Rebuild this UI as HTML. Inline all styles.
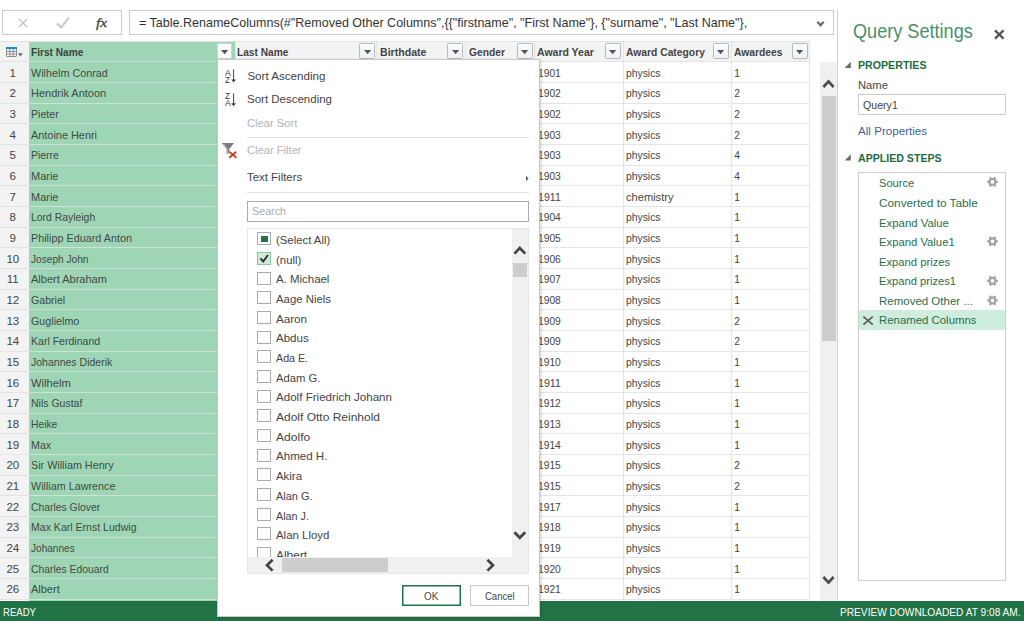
<!DOCTYPE html>
<html lang="en"><head><meta charset="utf-8"><title>Query Editor</title>
<style>
html,body{margin:0;padding:0}
body{width:1024px;height:621px;position:relative;overflow:hidden;background:#fff;font-family:'Liberation Sans',sans-serif}
.t{position:absolute;white-space:pre;line-height:normal;transform-origin:0 0}
.b{position:absolute;box-sizing:border-box}
svg{position:absolute;overflow:visible}
</style></head><body>

<div class="b" style="left:2.20px;top:10.30px;width:119.70px;height:25.20px;border:1px solid #cacaca;background:#fff"></div>
<div class="b" style="left:129.00px;top:10.30px;width:705.00px;height:25.20px;border:1px solid #cacaca;background:#fff"></div>
<svg style="left:0;top:0" width="1024" height="621" viewBox="0 0 1024 621">
<path d="M18.9 18.9 L27.3 26.9 M27.3 18.9 L18.9 26.9" stroke="#c4c4c4" stroke-width="1.4" fill="none"/>
<path d="M56.8 23.4 L61.3 27.4 L68.8 17.6" stroke="#cdcdcd" stroke-width="2.3" fill="none"/>
<path d="M817.3 21.7 L820.5 25.3 L823.7 21.7" stroke="#6a6a6a" stroke-width="2.2" fill="none"/>
</svg>
<div class="b" style="left:0.00px;top:41.40px;width:809.80px;height:20.20px;background:#f3f3f3"></div>
<div class="b" style="left:0.00px;top:61.60px;width:29.00px;height:537.60px;background:#f3f3f3"></div>
<div class="b" style="left:29.00px;top:41.40px;width:205.80px;height:559.90px;background:#9ed5b5"></div>
<div class="b" style="left:0.00px;top:61.30px;width:29.00px;height:1.00px;background:#e4e4e4"></div>
<div class="b" style="left:29.00px;top:61.30px;width:205.80px;height:1.00px;background:#cde3d7"></div>
<div class="b" style="left:234.80px;top:61.30px;width:575.00px;height:1.00px;background:#e5e5e5"></div>
<div class="b" style="left:0.00px;top:81.97px;width:29.00px;height:1.00px;background:#e4e4e4"></div>
<div class="b" style="left:29.00px;top:81.97px;width:205.80px;height:1.00px;background:#cde3d7"></div>
<div class="b" style="left:234.80px;top:81.97px;width:575.00px;height:1.00px;background:#e5e5e5"></div>
<div class="b" style="left:0.00px;top:102.63px;width:29.00px;height:1.00px;background:#e4e4e4"></div>
<div class="b" style="left:29.00px;top:102.63px;width:205.80px;height:1.00px;background:#cde3d7"></div>
<div class="b" style="left:234.80px;top:102.63px;width:575.00px;height:1.00px;background:#e5e5e5"></div>
<div class="b" style="left:0.00px;top:123.29px;width:29.00px;height:1.00px;background:#e4e4e4"></div>
<div class="b" style="left:29.00px;top:123.29px;width:205.80px;height:1.00px;background:#cde3d7"></div>
<div class="b" style="left:234.80px;top:123.29px;width:575.00px;height:1.00px;background:#e5e5e5"></div>
<div class="b" style="left:0.00px;top:143.96px;width:29.00px;height:1.00px;background:#e4e4e4"></div>
<div class="b" style="left:29.00px;top:143.96px;width:205.80px;height:1.00px;background:#cde3d7"></div>
<div class="b" style="left:234.80px;top:143.96px;width:575.00px;height:1.00px;background:#e5e5e5"></div>
<div class="b" style="left:0.00px;top:164.62px;width:29.00px;height:1.00px;background:#e4e4e4"></div>
<div class="b" style="left:29.00px;top:164.62px;width:205.80px;height:1.00px;background:#cde3d7"></div>
<div class="b" style="left:234.80px;top:164.62px;width:575.00px;height:1.00px;background:#e5e5e5"></div>
<div class="b" style="left:0.00px;top:185.29px;width:29.00px;height:1.00px;background:#e4e4e4"></div>
<div class="b" style="left:29.00px;top:185.29px;width:205.80px;height:1.00px;background:#cde3d7"></div>
<div class="b" style="left:234.80px;top:185.29px;width:575.00px;height:1.00px;background:#e5e5e5"></div>
<div class="b" style="left:0.00px;top:205.95px;width:29.00px;height:1.00px;background:#e4e4e4"></div>
<div class="b" style="left:29.00px;top:205.95px;width:205.80px;height:1.00px;background:#cde3d7"></div>
<div class="b" style="left:234.80px;top:205.95px;width:575.00px;height:1.00px;background:#e5e5e5"></div>
<div class="b" style="left:0.00px;top:226.62px;width:29.00px;height:1.00px;background:#e4e4e4"></div>
<div class="b" style="left:29.00px;top:226.62px;width:205.80px;height:1.00px;background:#cde3d7"></div>
<div class="b" style="left:234.80px;top:226.62px;width:575.00px;height:1.00px;background:#e5e5e5"></div>
<div class="b" style="left:0.00px;top:247.28px;width:29.00px;height:1.00px;background:#e4e4e4"></div>
<div class="b" style="left:29.00px;top:247.28px;width:205.80px;height:1.00px;background:#cde3d7"></div>
<div class="b" style="left:234.80px;top:247.28px;width:575.00px;height:1.00px;background:#e5e5e5"></div>
<div class="b" style="left:0.00px;top:267.95px;width:29.00px;height:1.00px;background:#e4e4e4"></div>
<div class="b" style="left:29.00px;top:267.95px;width:205.80px;height:1.00px;background:#cde3d7"></div>
<div class="b" style="left:234.80px;top:267.95px;width:575.00px;height:1.00px;background:#e5e5e5"></div>
<div class="b" style="left:0.00px;top:288.62px;width:29.00px;height:1.00px;background:#e4e4e4"></div>
<div class="b" style="left:29.00px;top:288.62px;width:205.80px;height:1.00px;background:#cde3d7"></div>
<div class="b" style="left:234.80px;top:288.62px;width:575.00px;height:1.00px;background:#e5e5e5"></div>
<div class="b" style="left:0.00px;top:309.28px;width:29.00px;height:1.00px;background:#e4e4e4"></div>
<div class="b" style="left:29.00px;top:309.28px;width:205.80px;height:1.00px;background:#cde3d7"></div>
<div class="b" style="left:234.80px;top:309.28px;width:575.00px;height:1.00px;background:#e5e5e5"></div>
<div class="b" style="left:0.00px;top:329.94px;width:29.00px;height:1.00px;background:#e4e4e4"></div>
<div class="b" style="left:29.00px;top:329.94px;width:205.80px;height:1.00px;background:#cde3d7"></div>
<div class="b" style="left:234.80px;top:329.94px;width:575.00px;height:1.00px;background:#e5e5e5"></div>
<div class="b" style="left:0.00px;top:350.61px;width:29.00px;height:1.00px;background:#e4e4e4"></div>
<div class="b" style="left:29.00px;top:350.61px;width:205.80px;height:1.00px;background:#cde3d7"></div>
<div class="b" style="left:234.80px;top:350.61px;width:575.00px;height:1.00px;background:#e5e5e5"></div>
<div class="b" style="left:0.00px;top:371.27px;width:29.00px;height:1.00px;background:#e4e4e4"></div>
<div class="b" style="left:29.00px;top:371.27px;width:205.80px;height:1.00px;background:#cde3d7"></div>
<div class="b" style="left:234.80px;top:371.27px;width:575.00px;height:1.00px;background:#e5e5e5"></div>
<div class="b" style="left:0.00px;top:391.94px;width:29.00px;height:1.00px;background:#e4e4e4"></div>
<div class="b" style="left:29.00px;top:391.94px;width:205.80px;height:1.00px;background:#cde3d7"></div>
<div class="b" style="left:234.80px;top:391.94px;width:575.00px;height:1.00px;background:#e5e5e5"></div>
<div class="b" style="left:0.00px;top:412.61px;width:29.00px;height:1.00px;background:#e4e4e4"></div>
<div class="b" style="left:29.00px;top:412.61px;width:205.80px;height:1.00px;background:#cde3d7"></div>
<div class="b" style="left:234.80px;top:412.61px;width:575.00px;height:1.00px;background:#e5e5e5"></div>
<div class="b" style="left:0.00px;top:433.27px;width:29.00px;height:1.00px;background:#e4e4e4"></div>
<div class="b" style="left:29.00px;top:433.27px;width:205.80px;height:1.00px;background:#cde3d7"></div>
<div class="b" style="left:234.80px;top:433.27px;width:575.00px;height:1.00px;background:#e5e5e5"></div>
<div class="b" style="left:0.00px;top:453.94px;width:29.00px;height:1.00px;background:#e4e4e4"></div>
<div class="b" style="left:29.00px;top:453.94px;width:205.80px;height:1.00px;background:#cde3d7"></div>
<div class="b" style="left:234.80px;top:453.94px;width:575.00px;height:1.00px;background:#e5e5e5"></div>
<div class="b" style="left:0.00px;top:474.60px;width:29.00px;height:1.00px;background:#e4e4e4"></div>
<div class="b" style="left:29.00px;top:474.60px;width:205.80px;height:1.00px;background:#cde3d7"></div>
<div class="b" style="left:234.80px;top:474.60px;width:575.00px;height:1.00px;background:#e5e5e5"></div>
<div class="b" style="left:0.00px;top:495.26px;width:29.00px;height:1.00px;background:#e4e4e4"></div>
<div class="b" style="left:29.00px;top:495.26px;width:205.80px;height:1.00px;background:#cde3d7"></div>
<div class="b" style="left:234.80px;top:495.26px;width:575.00px;height:1.00px;background:#e5e5e5"></div>
<div class="b" style="left:0.00px;top:515.93px;width:29.00px;height:1.00px;background:#e4e4e4"></div>
<div class="b" style="left:29.00px;top:515.93px;width:205.80px;height:1.00px;background:#cde3d7"></div>
<div class="b" style="left:234.80px;top:515.93px;width:575.00px;height:1.00px;background:#e5e5e5"></div>
<div class="b" style="left:0.00px;top:536.59px;width:29.00px;height:1.00px;background:#e4e4e4"></div>
<div class="b" style="left:29.00px;top:536.59px;width:205.80px;height:1.00px;background:#cde3d7"></div>
<div class="b" style="left:234.80px;top:536.59px;width:575.00px;height:1.00px;background:#e5e5e5"></div>
<div class="b" style="left:0.00px;top:557.26px;width:29.00px;height:1.00px;background:#e4e4e4"></div>
<div class="b" style="left:29.00px;top:557.26px;width:205.80px;height:1.00px;background:#cde3d7"></div>
<div class="b" style="left:234.80px;top:557.26px;width:575.00px;height:1.00px;background:#e5e5e5"></div>
<div class="b" style="left:0.00px;top:577.92px;width:29.00px;height:1.00px;background:#e4e4e4"></div>
<div class="b" style="left:29.00px;top:577.92px;width:205.80px;height:1.00px;background:#cde3d7"></div>
<div class="b" style="left:234.80px;top:577.92px;width:575.00px;height:1.00px;background:#e5e5e5"></div>
<div class="b" style="left:0.00px;top:598.59px;width:29.00px;height:1.00px;background:#e4e4e4"></div>
<div class="b" style="left:29.00px;top:598.59px;width:205.80px;height:1.00px;background:#cde3d7"></div>
<div class="b" style="left:234.80px;top:598.59px;width:575.00px;height:1.00px;background:#e5e5e5"></div>
<div class="b" style="left:234.80px;top:41.40px;width:1.00px;height:558.00px;background:#e5e5e5"></div>
<div class="b" style="left:376.30px;top:41.40px;width:1.00px;height:558.00px;background:#e5e5e5"></div>
<div class="b" style="left:464.50px;top:41.40px;width:1.00px;height:558.00px;background:#e5e5e5"></div>
<div class="b" style="left:534.00px;top:41.40px;width:1.00px;height:558.00px;background:#e5e5e5"></div>
<div class="b" style="left:622.90px;top:41.40px;width:1.00px;height:558.00px;background:#e5e5e5"></div>
<div class="b" style="left:730.80px;top:41.40px;width:1.00px;height:558.00px;background:#e5e5e5"></div>
<div class="b" style="left:809.00px;top:41.40px;width:1.00px;height:558.00px;background:#e5e5e5"></div>
<div class="b" style="left:0.00px;top:41.00px;width:810.00px;height:1.00px;background:#e2e2e2"></div>
<div class="b" style="left:216.90px;top:43.40px;width:15.40px;height:15.60px;border:1px solid #d2d2de;background:#fbfbfd;border-radius:1px"></div>
<svg style="left:221.2px;top:49.5px" width="7.2" height="4.3" viewBox="0 0 7.2 4.3"><path d="M0 0H7.2L3.6 4.3Z" fill="#555"/></svg>
<div class="b" style="left:359.20px;top:43.20px;width:15.90px;height:15.80px;border:1px solid #b4b9c2;background:linear-gradient(#fbfcfd,#eff2f6);border-radius:1.5px"></div>
<svg style="left:363.5px;top:49.5px" width="7.2" height="4.3" viewBox="0 0 7.2 4.3"><path d="M0 0H7.2L3.6 4.3Z" fill="#555"/></svg>
<div class="b" style="left:447.20px;top:43.20px;width:15.90px;height:15.80px;border:1px solid #b4b9c2;background:linear-gradient(#fbfcfd,#eff2f6);border-radius:1.5px"></div>
<svg style="left:451.5px;top:49.5px" width="7.2" height="4.3" viewBox="0 0 7.2 4.3"><path d="M0 0H7.2L3.6 4.3Z" fill="#555"/></svg>
<div class="b" style="left:517.00px;top:43.20px;width:15.90px;height:15.80px;border:1px solid #b4b9c2;background:linear-gradient(#fbfcfd,#eff2f6);border-radius:1.5px"></div>
<svg style="left:521.3px;top:49.5px" width="7.2" height="4.3" viewBox="0 0 7.2 4.3"><path d="M0 0H7.2L3.6 4.3Z" fill="#555"/></svg>
<div class="b" style="left:604.80px;top:43.20px;width:15.90px;height:15.80px;border:1px solid #b4b9c2;background:linear-gradient(#fbfcfd,#eff2f6);border-radius:1.5px"></div>
<svg style="left:609.1px;top:49.5px" width="7.2" height="4.3" viewBox="0 0 7.2 4.3"><path d="M0 0H7.2L3.6 4.3Z" fill="#555"/></svg>
<div class="b" style="left:712.80px;top:43.20px;width:15.90px;height:15.80px;border:1px solid #b4b9c2;background:linear-gradient(#fbfcfd,#eff2f6);border-radius:1.5px"></div>
<svg style="left:717.1px;top:49.5px" width="7.2" height="4.3" viewBox="0 0 7.2 4.3"><path d="M0 0H7.2L3.6 4.3Z" fill="#555"/></svg>
<div class="b" style="left:791.80px;top:43.20px;width:15.90px;height:15.80px;border:1px solid #b4b9c2;background:linear-gradient(#fbfcfd,#eff2f6);border-radius:1.5px"></div>
<svg style="left:796.1px;top:49.5px" width="7.2" height="4.3" viewBox="0 0 7.2 4.3"><path d="M0 0H7.2L3.6 4.3Z" fill="#555"/></svg>
<svg style="left:6px;top:47px" width="18" height="11" viewBox="0 0 18 11">
<rect x="0.5" y="0.5" width="10" height="9" fill="#fff" stroke="#8a8a8a" stroke-width="1" rx="0.6"/>
<rect x="0" y="0" width="11" height="2.1" fill="#1e8fc6"/>
<path d="M0.5 4.4H10.5M0.5 7H10.5M3.8 2V10M7.2 2V10" stroke="#8a8a8a" stroke-width="1" fill="none"/>
<path d="M12 6.3H16.8L14.4 9.6Z" fill="#666"/></svg>
<div class="b" style="left:820.40px;top:62.40px;width:16.40px;height:538.90px;background:#f0f0f0"></div>
<div class="b" style="left:821.90px;top:96.40px;width:13.90px;height:244.70px;background:#cdcdcd"></div>
<svg style="left:0;top:0" width="1024" height="621" viewBox="0 0 1024 621">
<path d="M823.4 87 L828.5 81.4 L833.6 87" stroke="#4a4a4a" stroke-width="2.7" fill="none"/>
<path d="M823.4 577 L828.5 582.6 L833.6 577" stroke="#4a4a4a" stroke-width="2.7" fill="none"/>
</svg>
<div class="b" style="left:837.20px;top:10.00px;width:1.00px;height:591.30px;background:#d0d0d0"></div>
<div class="b" style="left:858.20px;top:94.10px;width:147.60px;height:21.30px;border:1px solid #cacaca;background:#fff"></div>
<div class="b" style="left:858.20px;top:172.30px;width:147.40px;height:409.00px;border:1px solid #cecece;background:#fff"></div>
<div class="b" style="left:859.20px;top:310.40px;width:145.40px;height:19.60px;background:#cfeddc"></div>
<svg style="left:0;top:0" width="1024" height="621" viewBox="0 0 1024 621">
<path d="M995 30.3 L1003.6 38.6 M1003.6 30.3 L995 38.6" stroke="#555" stroke-width="2.3" fill="none"/>
<path d="M850.8 61.8 V67.9 H844.6 Z" fill="#6a6a6a"/>
<path d="M850.8 154.5 V160.6 H844.6 Z" fill="#6a6a6a"/>
<path d="M863.4 316.6 L872.8 324.6 M872.8 316.6 L863.4 324.6" stroke="#5a5a5a" stroke-width="1.7" fill="none"/>
<path d="M995.80 181.90L997.80 181.90M994.15 184.76L995.15 186.49M990.85 184.76L989.85 186.49M989.20 181.90L987.20 181.90M990.85 179.04L989.85 177.31M994.15 179.04L995.15 177.31" stroke="#a3a3a3" stroke-width="2.3" fill="none"/>
<circle cx="992.5" cy="181.9" r="2.9" fill="none" stroke="#a3a3a3" stroke-width="2.1"/>
<path d="M995.80 241.30L997.80 241.30M994.15 244.16L995.15 245.89M990.85 244.16L989.85 245.89M989.20 241.30L987.20 241.30M990.85 238.44L989.85 236.71M994.15 238.44L995.15 236.71" stroke="#a3a3a3" stroke-width="2.3" fill="none"/>
<circle cx="992.5" cy="241.3" r="2.9" fill="none" stroke="#a3a3a3" stroke-width="2.1"/>
<path d="M995.80 280.80L997.80 280.80M994.15 283.66L995.15 285.39M990.85 283.66L989.85 285.39M989.20 280.80L987.20 280.80M990.85 277.94L989.85 276.21M994.15 277.94L995.15 276.21" stroke="#a3a3a3" stroke-width="2.3" fill="none"/>
<circle cx="992.5" cy="280.8" r="2.9" fill="none" stroke="#a3a3a3" stroke-width="2.1"/>
<path d="M995.80 300.40L997.80 300.40M994.15 303.26L995.15 304.99M990.85 303.26L989.85 304.99M989.20 300.40L987.20 300.40M990.85 297.54L989.85 295.81M994.15 297.54L995.15 295.81" stroke="#a3a3a3" stroke-width="2.3" fill="none"/>
<circle cx="992.5" cy="300.4" r="2.9" fill="none" stroke="#a3a3a3" stroke-width="2.1"/>
</svg>
<div class="b" style="left:0.00px;top:601.30px;width:1024.00px;height:19.70px;background:#217346"></div>
<span class="t" style="left:537.60px;top:68px;font-size:10.2px;color:#444;transform:scaleX(1.0057);">1901</span>
<span class="t" style="left:537.60px;top:88px;font-size:10.2px;color:#444;transform:scaleX(1.0057);">1902</span>
<span class="t" style="left:537.60px;top:109px;font-size:10.2px;color:#444;transform:scaleX(1.0057);">1902</span>
<span class="t" style="left:537.60px;top:130px;font-size:10.2px;color:#444;transform:scaleX(1.0057);">1903</span>
<span class="t" style="left:537.60px;top:150px;font-size:10.2px;color:#444;transform:scaleX(1.0057);">1903</span>
<span class="t" style="left:537.60px;top:171px;font-size:10.2px;color:#444;transform:scaleX(1.0057);">1903</span>
<span class="t" style="left:537.60px;top:192px;font-size:10.2px;color:#444;transform:scaleX(1.0408);">1911</span>
<span class="t" style="left:537.60px;top:212px;font-size:10.2px;color:#444;transform:scaleX(1.0057);">1904</span>
<span class="t" style="left:537.60px;top:233px;font-size:10.2px;color:#444;transform:scaleX(1.0057);">1905</span>
<span class="t" style="left:537.60px;top:254px;font-size:10.2px;color:#444;transform:scaleX(1.0057);">1906</span>
<span class="t" style="left:537.60px;top:274px;font-size:10.2px;color:#444;transform:scaleX(1.0057);">1907</span>
<span class="t" style="left:537.60px;top:295px;font-size:10.2px;color:#444;transform:scaleX(1.0057);">1908</span>
<span class="t" style="left:537.60px;top:316px;font-size:10.2px;color:#444;transform:scaleX(1.0057);">1909</span>
<span class="t" style="left:537.60px;top:336px;font-size:10.2px;color:#444;transform:scaleX(1.0057);">1909</span>
<span class="t" style="left:537.60px;top:357px;font-size:10.2px;color:#444;transform:scaleX(1.0057);">1910</span>
<span class="t" style="left:537.60px;top:378px;font-size:10.2px;color:#444;transform:scaleX(1.0408);">1911</span>
<span class="t" style="left:537.60px;top:398px;font-size:10.2px;color:#444;transform:scaleX(1.0057);">1912</span>
<span class="t" style="left:537.60px;top:419px;font-size:10.2px;color:#444;transform:scaleX(1.0057);">1913</span>
<span class="t" style="left:537.60px;top:440px;font-size:10.2px;color:#444;transform:scaleX(1.0057);">1914</span>
<span class="t" style="left:537.60px;top:460px;font-size:10.2px;color:#444;transform:scaleX(1.0057);">1915</span>
<span class="t" style="left:537.60px;top:481px;font-size:10.2px;color:#444;transform:scaleX(1.0057);">1915</span>
<span class="t" style="left:537.60px;top:502px;font-size:10.2px;color:#444;transform:scaleX(1.0057);">1917</span>
<span class="t" style="left:537.60px;top:522px;font-size:10.2px;color:#444;transform:scaleX(1.0057);">1918</span>
<span class="t" style="left:537.60px;top:543px;font-size:10.2px;color:#444;transform:scaleX(1.0057);">1919</span>
<span class="t" style="left:537.60px;top:564px;font-size:10.2px;color:#444;transform:scaleX(1.0057);">1920</span>
<span class="t" style="left:537.60px;top:584px;font-size:10.2px;color:#444;transform:scaleX(1.0057);">1921</span>
<div class="b" style="left:216.70px;top:59.00px;width:323.80px;height:557.90px;background:#fff;border:1px solid #c8c8c8;box-shadow:1px 1px 3px rgba(0,0,0,0.18)"></div>
<div class="b" style="left:247.20px;top:137.00px;width:281.80px;height:1.00px;background:#e1e1e1"></div>
<div class="b" style="left:247.20px;top:192.10px;width:281.80px;height:1.00px;background:#e1e1e1"></div>
<div class="b" style="left:247.20px;top:201.30px;width:281.80px;height:21.20px;border:1px solid #ababab;background:#fff"></div>
<div class="b" style="left:247.20px;top:228.40px;width:281.80px;height:345.60px;border:1px solid #e6e6e6;background:#fff"></div>
<div class="b" style="left:511.60px;top:229.40px;width:16.40px;height:327.60px;background:#f0f0f0"></div>
<div class="b" style="left:248.20px;top:557.00px;width:279.80px;height:16.00px;background:#f0f0f0"></div>
<div class="b" style="left:512.90px;top:263.00px;width:14.00px;height:13.90px;background:#cdcdcd"></div>
<div class="b" style="left:281.50px;top:558.20px;width:106.00px;height:14.30px;background:#cdcdcd"></div>
<div class="b" style="left:257.20px;top:232.00px;width:13.60px;height:13.00px;border:1px solid #ababab;background:#fff"></div>
<div class="b" style="left:257.20px;top:252.00px;width:13.60px;height:13.00px;border:1px solid #86c9a4;background:#cfeadb"></div>
<div class="b" style="left:257.20px;top:272.00px;width:13.60px;height:13.00px;border:1px solid #ababab;background:#fff"></div>
<div class="b" style="left:257.20px;top:291.00px;width:13.60px;height:13.00px;border:1px solid #ababab;background:#fff"></div>
<div class="b" style="left:257.20px;top:311.00px;width:13.60px;height:13.00px;border:1px solid #ababab;background:#fff"></div>
<div class="b" style="left:257.20px;top:331.00px;width:13.60px;height:13.00px;border:1px solid #ababab;background:#fff"></div>
<div class="b" style="left:257.20px;top:350.00px;width:13.60px;height:13.00px;border:1px solid #ababab;background:#fff"></div>
<div class="b" style="left:257.20px;top:370.00px;width:13.60px;height:13.00px;border:1px solid #ababab;background:#fff"></div>
<div class="b" style="left:257.20px;top:390.00px;width:13.60px;height:13.00px;border:1px solid #ababab;background:#fff"></div>
<div class="b" style="left:257.20px;top:409.00px;width:13.60px;height:13.00px;border:1px solid #ababab;background:#fff"></div>
<div class="b" style="left:257.20px;top:429.00px;width:13.60px;height:13.00px;border:1px solid #ababab;background:#fff"></div>
<div class="b" style="left:257.20px;top:449.00px;width:13.60px;height:13.00px;border:1px solid #ababab;background:#fff"></div>
<div class="b" style="left:257.20px;top:468.00px;width:13.60px;height:13.00px;border:1px solid #ababab;background:#fff"></div>
<div class="b" style="left:257.20px;top:488.00px;width:13.60px;height:13.00px;border:1px solid #ababab;background:#fff"></div>
<div class="b" style="left:257.20px;top:508.00px;width:13.60px;height:13.00px;border:1px solid #ababab;background:#fff"></div>
<div class="b" style="left:257.20px;top:527.00px;width:13.60px;height:13.00px;border:1px solid #ababab;background:#fff"></div>
<div class="b" style="left:257.20px;top:547.00px;width:13.60px;height:10.00px;border:1px solid #ababab;background:#fff;border-bottom:none"></div>
<div class="b" style="left:260.80px;top:235.60px;width:6.80px;height:6.40px;background:#217346"></div>
<svg style="left:0;top:0" width="1024" height="621" viewBox="0 0 1024 621">
<path d="M260.4 258.4 L263.2 261.4 L268 255" stroke="#333" stroke-width="1.9" fill="none"/>
<path d="M514.4 253.6 L519.8 248 L525.2 253.6" stroke="#444" stroke-width="2.7" fill="none"/>
<path d="M514.4 532.2 L519.8 537.8 L525.2 532.2" stroke="#444" stroke-width="2.7" fill="none"/>
<path d="M272.6 559.8 L267 565.2 L272.6 570.6" stroke="#444" stroke-width="2.7" fill="none"/>
<path d="M487.4 559.8 L493 565.2 L487.4 570.6" stroke="#444" stroke-width="2.7" fill="none"/>
<path d="M526 175.6 L528.6 178.4 L526 181.2 Z" fill="#666"/>
<path d="M233.6 69.3 V80.5" stroke="#444" stroke-width="1" fill="none"/><path d="M231.2 79.6 H236 L233.6 82.6 Z" fill="#444"/>
<path d="M233.6 93.3 V104.2" stroke="#444" stroke-width="1" fill="none"/><path d="M231.2 103.3 H236 L233.6 106.3 Z" fill="#444"/>
<path d="M221.9 143 H234 L229.2 148.9 V151.4 L228.2 153.7 H226.6 V148.9 Z" fill="#7a7a7a"/>
<path d="M223.6 144 L227.4 148.6 V153" stroke="#c4c4c4" stroke-width="0.8" fill="none"/>
<path d="M229.2 151.6 L236.4 157.8 M236.2 151.8 L229.2 157.8" stroke="#d13b14" stroke-width="1.8" fill="none"/>
</svg>
<div class="b" style="left:401.60px;top:584.50px;width:59.40px;height:21.50px;border:1px solid #217346;background:#fff;box-shadow:inset 0 0 0 0.5px #217346"></div>
<div class="b" style="left:470.20px;top:584.50px;width:59.00px;height:21.50px;border:1px solid #c8c8c8;background:#fff"></div>
<div class="b" style="left:248.2px;top:229.4px;width:263.4px;height:327.6px;overflow:hidden">
<span class="t" style="left:27.80px;top:3.5999999999999943px;font-size:11.6px;color:#444;transform:scaleX(0.9780);">(Select All)</span>
<span class="t" style="left:27.80px;top:23.599999999999994px;font-size:11.6px;color:#444;transform:scaleX(0.9852);">(null)</span>
<span class="t" style="left:27.80px;top:42.599999999999994px;font-size:11.6px;color:#444;transform:scaleX(0.9866);">A. Michael</span>
<span class="t" style="left:27.80px;top:62.599999999999994px;font-size:11.6px;color:#444;transform:scaleX(0.9808);">Aage Niels</span>
<span class="t" style="left:27.80px;top:82.6px;font-size:11.6px;color:#444;">Aaron</span>
<span class="t" style="left:27.80px;top:101.6px;font-size:11.6px;color:#444;transform:scaleX(0.9947);">Abdus</span>
<span class="t" style="left:27.80px;top:121.6px;font-size:11.6px;color:#444;transform:scaleX(0.9221);">Ada E.</span>
<span class="t" style="left:27.80px;top:141.6px;font-size:11.6px;color:#444;transform:scaleX(0.9683);">Adam G.</span>
<span class="t" style="left:27.80px;top:160.6px;font-size:11.6px;color:#444;">Adolf Friedrich Johann</span>
<span class="t" style="left:27.80px;top:180.6px;font-size:11.6px;color:#444;transform:scaleX(1.0343);">Adolf Otto Reinhold</span>
<span class="t" style="left:27.80px;top:200.6px;font-size:11.6px;color:#444;transform:scaleX(1.0403);">Adolfo</span>
<span class="t" style="left:27.80px;top:219.6px;font-size:11.6px;color:#444;transform:scaleX(0.9968);">Ahmed H.</span>
<span class="t" style="left:27.80px;top:239.6px;font-size:11.6px;color:#444;transform:scaleX(0.9840);">Akira</span>
<span class="t" style="left:27.80px;top:259.6px;font-size:11.6px;color:#444;transform:scaleX(0.9438);">Alan G.</span>
<span class="t" style="left:27.80px;top:279.6px;font-size:11.6px;color:#444;transform:scaleX(0.9308);">Alan J.</span>
<span class="t" style="left:27.80px;top:298.6px;font-size:11.6px;color:#444;transform:scaleX(0.9860);">Alan Lloyd</span>
<span class="t" style="left:27.80px;top:318.6px;font-size:11.6px;color:#444;transform:scaleX(1.0298);">Albert</span>
</div>
<span class="t" style="left:9.60px;top:67px;font-size:11.5px;color:#444;">1</span>
<span class="t" style="left:31.20px;top:68px;font-size:10.2px;color:#3f4a44;transform:scaleX(1.0598);">Wilhelm Conrad</span>
<span class="t" style="left:625.80px;top:68px;font-size:10.2px;color:#444;transform:scaleX(1.0152);">physics</span>
<span class="t" style="left:734.20px;top:68px;font-size:10.2px;color:#444;">1</span>
<span class="t" style="left:9.60px;top:87px;font-size:11.5px;color:#444;">2</span>
<span class="t" style="left:31.20px;top:88px;font-size:10.2px;color:#3f4a44;transform:scaleX(1.0793);">Hendrik Antoon</span>
<span class="t" style="left:625.80px;top:88px;font-size:10.2px;color:#444;transform:scaleX(1.0152);">physics</span>
<span class="t" style="left:734.20px;top:88px;font-size:10.2px;color:#444;">2</span>
<span class="t" style="left:9.60px;top:108px;font-size:11.5px;color:#444;">3</span>
<span class="t" style="left:31.20px;top:109px;font-size:10.2px;color:#3f4a44;transform:scaleX(1.0441);">Pieter</span>
<span class="t" style="left:625.80px;top:109px;font-size:10.2px;color:#444;transform:scaleX(1.0152);">physics</span>
<span class="t" style="left:734.20px;top:109px;font-size:10.2px;color:#444;">2</span>
<span class="t" style="left:9.60px;top:129px;font-size:11.5px;color:#444;">4</span>
<span class="t" style="left:31.20px;top:130px;font-size:10.2px;color:#3f4a44;transform:scaleX(1.0691);">Antoine Henri</span>
<span class="t" style="left:625.80px;top:130px;font-size:10.2px;color:#444;transform:scaleX(1.0152);">physics</span>
<span class="t" style="left:734.20px;top:130px;font-size:10.2px;color:#444;">2</span>
<span class="t" style="left:9.60px;top:149px;font-size:11.5px;color:#444;">5</span>
<span class="t" style="left:31.20px;top:150px;font-size:10.2px;color:#3f4a44;transform:scaleX(1.0225);">Pierre</span>
<span class="t" style="left:625.80px;top:150px;font-size:10.2px;color:#444;transform:scaleX(1.0152);">physics</span>
<span class="t" style="left:734.20px;top:150px;font-size:10.2px;color:#444;">4</span>
<span class="t" style="left:9.60px;top:170px;font-size:11.5px;color:#444;">6</span>
<span class="t" style="left:31.20px;top:171px;font-size:10.2px;color:#3f4a44;transform:scaleX(1.0791);">Marie</span>
<span class="t" style="left:625.80px;top:171px;font-size:10.2px;color:#444;transform:scaleX(1.0152);">physics</span>
<span class="t" style="left:734.20px;top:171px;font-size:10.2px;color:#444;">4</span>
<span class="t" style="left:9.60px;top:191px;font-size:11.5px;color:#444;">7</span>
<span class="t" style="left:31.20px;top:192px;font-size:10.2px;color:#3f4a44;transform:scaleX(1.0791);">Marie</span>
<span class="t" style="left:625.80px;top:192px;font-size:10.2px;color:#444;transform:scaleX(1.0896);">chemistry</span>
<span class="t" style="left:734.20px;top:192px;font-size:10.2px;color:#444;">1</span>
<span class="t" style="left:9.60px;top:211px;font-size:11.5px;color:#444;">8</span>
<span class="t" style="left:31.20px;top:212px;font-size:10.2px;color:#3f4a44;transform:scaleX(1.0211);">Lord Rayleigh</span>
<span class="t" style="left:625.80px;top:212px;font-size:10.2px;color:#444;transform:scaleX(1.0152);">physics</span>
<span class="t" style="left:734.20px;top:212px;font-size:10.2px;color:#444;">1</span>
<span class="t" style="left:9.60px;top:232px;font-size:11.5px;color:#444;">9</span>
<span class="t" style="left:31.20px;top:233px;font-size:10.2px;color:#3f4a44;transform:scaleX(1.0604);">Philipp Eduard Anton</span>
<span class="t" style="left:625.80px;top:233px;font-size:10.2px;color:#444;transform:scaleX(1.0152);">physics</span>
<span class="t" style="left:734.20px;top:233px;font-size:10.2px;color:#444;">1</span>
<span class="t" style="left:6.40px;top:253px;font-size:11.5px;color:#444;">10</span>
<span class="t" style="left:31.20px;top:254px;font-size:10.2px;color:#3f4a44;transform:scaleX(0.9951);">Joseph John</span>
<span class="t" style="left:625.80px;top:254px;font-size:10.2px;color:#444;transform:scaleX(1.0152);">physics</span>
<span class="t" style="left:734.20px;top:254px;font-size:10.2px;color:#444;">1</span>
<span class="t" style="left:6.82px;top:273px;font-size:11.5px;color:#444;">11</span>
<span class="t" style="left:31.20px;top:274px;font-size:10.2px;color:#3f4a44;transform:scaleX(1.0795);">Albert Abraham</span>
<span class="t" style="left:625.80px;top:274px;font-size:10.2px;color:#444;transform:scaleX(1.0152);">physics</span>
<span class="t" style="left:734.20px;top:274px;font-size:10.2px;color:#444;">1</span>
<span class="t" style="left:6.40px;top:294px;font-size:11.5px;color:#444;">12</span>
<span class="t" style="left:31.20px;top:295px;font-size:10.2px;color:#3f4a44;transform:scaleX(1.0413);">Gabriel</span>
<span class="t" style="left:625.80px;top:295px;font-size:10.2px;color:#444;transform:scaleX(1.0152);">physics</span>
<span class="t" style="left:734.20px;top:295px;font-size:10.2px;color:#444;">1</span>
<span class="t" style="left:6.40px;top:315px;font-size:11.5px;color:#444;">13</span>
<span class="t" style="left:31.20px;top:316px;font-size:10.2px;color:#3f4a44;transform:scaleX(1.0529);">Guglielmo</span>
<span class="t" style="left:625.80px;top:316px;font-size:10.2px;color:#444;transform:scaleX(1.0152);">physics</span>
<span class="t" style="left:734.20px;top:316px;font-size:10.2px;color:#444;">2</span>
<span class="t" style="left:6.40px;top:335px;font-size:11.5px;color:#444;">14</span>
<span class="t" style="left:31.20px;top:336px;font-size:10.2px;color:#3f4a44;transform:scaleX(1.0340);">Karl Ferdinand</span>
<span class="t" style="left:625.80px;top:336px;font-size:10.2px;color:#444;transform:scaleX(1.0152);">physics</span>
<span class="t" style="left:734.20px;top:336px;font-size:10.2px;color:#444;">2</span>
<span class="t" style="left:6.40px;top:356px;font-size:11.5px;color:#444;">15</span>
<span class="t" style="left:31.20px;top:357px;font-size:10.2px;color:#3f4a44;transform:scaleX(1.0328);">Johannes Diderik</span>
<span class="t" style="left:625.80px;top:357px;font-size:10.2px;color:#444;transform:scaleX(1.0152);">physics</span>
<span class="t" style="left:734.20px;top:357px;font-size:10.2px;color:#444;">1</span>
<span class="t" style="left:6.40px;top:377px;font-size:11.5px;color:#444;">16</span>
<span class="t" style="left:31.20px;top:378px;font-size:10.2px;color:#3f4a44;transform:scaleX(1.0984);">Wilhelm</span>
<span class="t" style="left:625.80px;top:378px;font-size:10.2px;color:#444;transform:scaleX(1.0152);">physics</span>
<span class="t" style="left:734.20px;top:378px;font-size:10.2px;color:#444;">1</span>
<span class="t" style="left:6.40px;top:397px;font-size:11.5px;color:#444;">17</span>
<span class="t" style="left:31.20px;top:398px;font-size:10.2px;color:#3f4a44;transform:scaleX(1.0315);">Nils Gustaf</span>
<span class="t" style="left:625.80px;top:398px;font-size:10.2px;color:#444;transform:scaleX(1.0152);">physics</span>
<span class="t" style="left:734.20px;top:398px;font-size:10.2px;color:#444;">1</span>
<span class="t" style="left:6.40px;top:418px;font-size:11.5px;color:#444;">18</span>
<span class="t" style="left:31.20px;top:419px;font-size:10.2px;color:#3f4a44;transform:scaleX(1.0097);">Heike</span>
<span class="t" style="left:625.80px;top:419px;font-size:10.2px;color:#444;transform:scaleX(1.0152);">physics</span>
<span class="t" style="left:734.20px;top:419px;font-size:10.2px;color:#444;">1</span>
<span class="t" style="left:6.40px;top:439px;font-size:11.5px;color:#444;">19</span>
<span class="t" style="left:31.20px;top:440px;font-size:10.2px;color:#3f4a44;transform:scaleX(1.0494);">Max</span>
<span class="t" style="left:625.80px;top:440px;font-size:10.2px;color:#444;transform:scaleX(1.0152);">physics</span>
<span class="t" style="left:734.20px;top:440px;font-size:10.2px;color:#444;">1</span>
<span class="t" style="left:6.40px;top:459px;font-size:11.5px;color:#444;">20</span>
<span class="t" style="left:31.20px;top:460px;font-size:10.2px;color:#3f4a44;transform:scaleX(1.0575);">Sir William Henry</span>
<span class="t" style="left:625.80px;top:460px;font-size:10.2px;color:#444;transform:scaleX(1.0152);">physics</span>
<span class="t" style="left:734.20px;top:460px;font-size:10.2px;color:#444;">2</span>
<span class="t" style="left:6.40px;top:480px;font-size:11.5px;color:#444;">21</span>
<span class="t" style="left:31.20px;top:481px;font-size:10.2px;color:#3f4a44;transform:scaleX(1.0573);">William Lawrence</span>
<span class="t" style="left:625.80px;top:481px;font-size:10.2px;color:#444;transform:scaleX(1.0152);">physics</span>
<span class="t" style="left:734.20px;top:481px;font-size:10.2px;color:#444;">2</span>
<span class="t" style="left:6.40px;top:501px;font-size:11.5px;color:#444;">22</span>
<span class="t" style="left:31.20px;top:502px;font-size:10.2px;color:#3f4a44;transform:scaleX(1.0169);">Charles Glover</span>
<span class="t" style="left:625.80px;top:502px;font-size:10.2px;color:#444;transform:scaleX(1.0152);">physics</span>
<span class="t" style="left:734.20px;top:502px;font-size:10.2px;color:#444;">1</span>
<span class="t" style="left:6.40px;top:521px;font-size:11.5px;color:#444;">23</span>
<span class="t" style="left:31.20px;top:522px;font-size:10.2px;color:#3f4a44;transform:scaleX(1.0351);">Max Karl Ernst Ludwig</span>
<span class="t" style="left:625.80px;top:522px;font-size:10.2px;color:#444;transform:scaleX(1.0152);">physics</span>
<span class="t" style="left:734.20px;top:522px;font-size:10.2px;color:#444;">1</span>
<span class="t" style="left:6.40px;top:542px;font-size:11.5px;color:#444;">24</span>
<span class="t" style="left:31.20px;top:543px;font-size:10.2px;color:#3f4a44;transform:scaleX(0.9890);">Johannes</span>
<span class="t" style="left:625.80px;top:543px;font-size:10.2px;color:#444;transform:scaleX(1.0152);">physics</span>
<span class="t" style="left:734.20px;top:543px;font-size:10.2px;color:#444;">1</span>
<span class="t" style="left:6.40px;top:563px;font-size:11.5px;color:#444;">25</span>
<span class="t" style="left:31.20px;top:564px;font-size:10.2px;color:#3f4a44;transform:scaleX(1.0163);">Charles Edouard</span>
<span class="t" style="left:625.80px;top:564px;font-size:10.2px;color:#444;transform:scaleX(1.0152);">physics</span>
<span class="t" style="left:734.20px;top:564px;font-size:10.2px;color:#444;">1</span>
<span class="t" style="left:6.40px;top:583px;font-size:11.5px;color:#444;">26</span>
<span class="t" style="left:31.20px;top:584px;font-size:10.2px;color:#3f4a44;transform:scaleX(1.0779);">Albert</span>
<span class="t" style="left:625.80px;top:584px;font-size:10.2px;color:#444;transform:scaleX(1.0152);">physics</span>
<span class="t" style="left:734.20px;top:584px;font-size:10.2px;color:#444;">1</span>
<span class="t" style="left:31.20px;top:47px;font-size:10.2px;color:#3a443e;font-weight:700;transform:scaleX(0.9951);">First Name</span>
<span class="t" style="left:237.00px;top:47px;font-size:10.2px;color:#444;font-weight:700;transform:scaleX(0.9975);">Last Name</span>
<span class="t" style="left:380.00px;top:47px;font-size:10.2px;color:#444;font-weight:700;transform:scaleX(1.0398);">Birthdate</span>
<span class="t" style="left:468.80px;top:47px;font-size:10.2px;color:#444;font-weight:700;transform:scaleX(1.0092);">Gender</span>
<span class="t" style="left:537.00px;top:47px;font-size:10.2px;color:#444;font-weight:700;transform:scaleX(1.0304);">Award Year</span>
<span class="t" style="left:625.60px;top:47px;font-size:10.2px;color:#444;font-weight:700;transform:scaleX(1.0121);">Award Category</span>
<span class="t" style="left:733.80px;top:47px;font-size:10.2px;color:#444;font-weight:700;transform:scaleX(1.0135);">Awardees</span>
<span class="t" style="left:139.30px;top:15px;font-size:12.8px;color:#333;transform:scaleX(0.9783);">= Table.RenameColumns(#"Removed Other Columns",{{"firstname", "First Name"}, {"surname", "Last Name"},</span>
<span class="t" style="left:96.20px;top:15px;font-size:13.5px;color:#444;font-style:italic;font-family:'Liberation Serif',serif;transform:scaleX(1.1282);-webkit-text-stroke:0.3px #444;">fx</span>
<span class="t" style="left:247.40px;top:69px;font-size:11.6px;color:#444;">Sort Ascending</span>
<span class="t" style="left:247.40px;top:92px;font-size:11.6px;color:#444;transform:scaleX(0.9916);">Sort Descending</span>
<span class="t" style="left:247.40px;top:116px;font-size:11.6px;color:#b4b4bc;transform:scaleX(0.9635);">Clear Sort</span>
<span class="t" style="left:247.40px;top:143px;font-size:11.6px;color:#b4b4bc;transform:scaleX(0.9629);">Clear Filter</span>
<span class="t" style="left:247.40px;top:170px;font-size:11.6px;color:#444;transform:scaleX(0.9849);">Text Filters</span>
<span class="t" style="left:252.00px;top:204px;font-size:11.6px;color:#ababab;transform:scaleX(0.9256);">Search</span>
<span class="t" style="left:424.00px;top:589px;font-size:11.6px;color:#444;transform:scaleX(0.8470);">OK</span>
<span class="t" style="left:485.00px;top:589px;font-size:11.6px;color:#444;transform:scaleX(0.8201);">Cancel</span>
<span class="t" style="left:853.00px;top:20px;font-size:20px;color:#4a8f6e;transform:scaleX(0.9055);">Query Settings</span>
<span class="t" style="left:858.00px;top:58px;font-size:11.8px;color:#1e6b41;font-weight:700;transform:scaleX(0.9008);">PROPERTIES</span>
<span class="t" style="left:858.00px;top:78px;font-size:11.6px;color:#444;transform:scaleX(0.9665);">Name</span>
<span class="t" style="left:863.40px;top:98px;font-size:11.6px;color:#444;transform:scaleX(0.9150);">Query1</span>
<span class="t" style="left:858.00px;top:124px;font-size:11.6px;color:#44609b;transform:scaleX(1.0021);">All Properties</span>
<span class="t" style="left:858.00px;top:151px;font-size:11.8px;color:#1e6b41;font-weight:700;transform:scaleX(0.8980);">APPLIED STEPS</span>
<span class="t" style="left:878.50px;top:176px;font-size:11.6px;color:#2b6e4c;transform:scaleX(0.9582);">Source</span>
<span class="t" style="left:878.50px;top:196px;font-size:11.6px;color:#2b6e4c;transform:scaleX(1.0174);">Converted to Table</span>
<span class="t" style="left:878.50px;top:216px;font-size:11.6px;color:#2b6e4c;transform:scaleX(0.9798);">Expand Value</span>
<span class="t" style="left:878.50px;top:235px;font-size:11.6px;color:#2b6e4c;transform:scaleX(0.9730);">Expand Value1</span>
<span class="t" style="left:878.50px;top:255px;font-size:11.6px;color:#2b6e4c;transform:scaleX(0.9691);">Expand prizes</span>
<span class="t" style="left:878.50px;top:274px;font-size:11.6px;color:#2b6e4c;transform:scaleX(0.9634);">Expand prizes1</span>
<span class="t" style="left:878.50px;top:294px;font-size:11.6px;color:#2b6e4c;transform:scaleX(0.9912);">Removed Other ...</span>
<span class="t" style="left:878.50px;top:313px;font-size:11.6px;color:#2b6e4c;transform:scaleX(0.9824);">Renamed Columns</span>
<span class="t" style="left:3.00px;top:606px;font-size:11px;color:#fff;transform:scaleX(0.8706);">READY</span>
<span class="t" style="left:839.60px;top:606px;font-size:11px;color:#fff;transform:scaleX(0.9223);">PREVIEW DOWNLOADED AT 9:08 AM.</span>
<span class="t" style="left:224.70px;top:68px;font-size:8.6px;color:#3a3a3a;transform:scaleX(1.0289);">A</span>
<span class="t" style="left:225.00px;top:75px;font-size:8.6px;color:#3a3a3a;transform:scaleX(0.9333);">Z</span>
<span class="t" style="left:225.00px;top:91px;font-size:8.6px;color:#3a3a3a;transform:scaleX(0.9333);">Z</span>
<span class="t" style="left:224.70px;top:98px;font-size:8.6px;color:#3a3a3a;transform:scaleX(1.0289);">A</span>

</body></html>
